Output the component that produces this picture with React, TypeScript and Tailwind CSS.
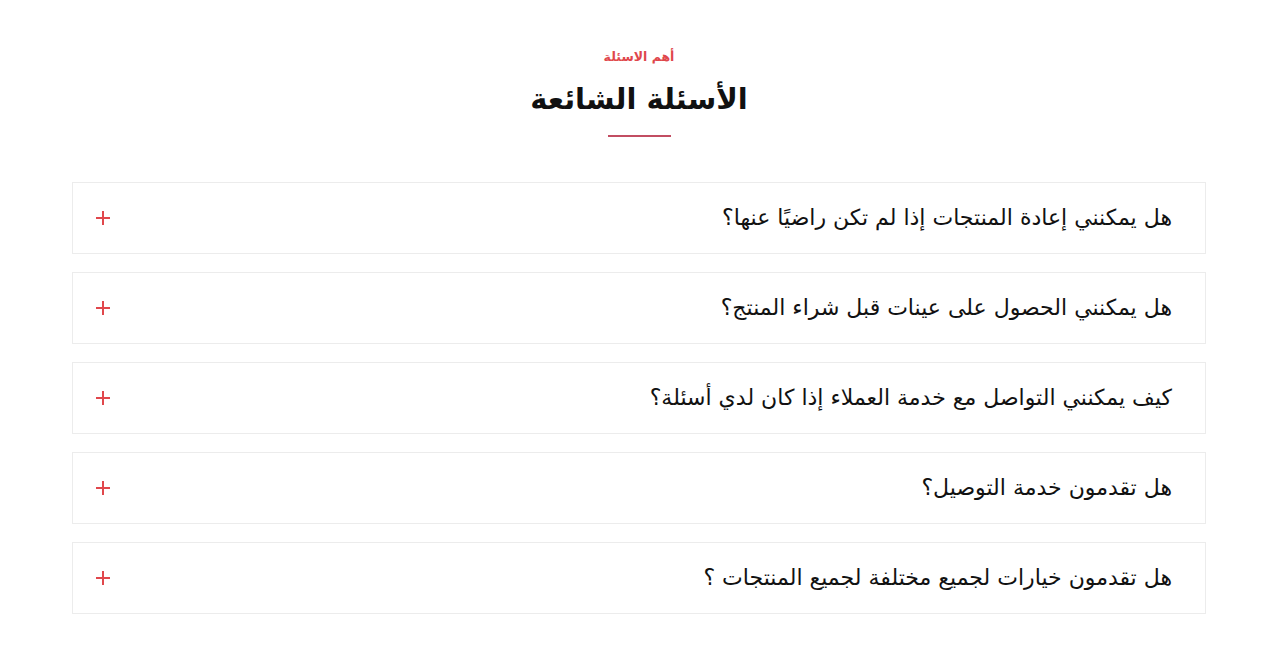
const faqs = [
  "هل يمكنني إعادة المنتجات إذا لم تكن راضيًا عنها؟",
  "هل يمكنني الحصول على عينات قبل شراء المنتج؟",
  "كيف يمكنني التواصل مع خدمة العملاء إذا كان لدي أسئلة؟",
  "هل تقدمون خدمة التوصيل؟",
  "هل تقدمون خيارات لجميع مختلفة لجميع المنتجات ؟",
];

function PlusIcon() {
  return (
    <svg width="14" height="14" viewBox="0 0 14 14" className="shrink-0">
      <path d="M7 0v14M0 7h14" stroke="#e0474c" strokeWidth="2" />
    </svg>
  );
}

export default function App() {
  return (
    <main
      dir="rtl"
      className="min-h-screen bg-white"
      style={{ fontFamily: '"DejaVu Sans", "Noto Sans", sans-serif' }}
    >
      <section className="mx-auto flex w-full flex-col items-center pl-[72px] pr-[73px] pt-[47px]">
        <p className="text-[12.5px] font-bold leading-5 text-[#e0474c]">أهم الاسئلة</p>
        <h1 className="mt-[14px] text-[29px] font-bold leading-9 text-[#111]">
          الأسئلة الشائعة
        </h1>
        <span className="mt-[18px] h-[2px] w-[63px] bg-[#c24d62]" />

        <div className="mt-[45px] flex w-full flex-col gap-[18px]">
          {faqs.map((q) => (
            <button
              key={q}
              type="button"
              className="flex h-[72px] w-full items-center justify-between border border-[#ececec] bg-white pl-[23px] pr-[33px] text-right"
            >
              <span className="text-[22px] leading-7 text-[#111]">{q}</span>
              <PlusIcon />
            </button>
          ))}
        </div>
      </section>
    </main>
  );
}
